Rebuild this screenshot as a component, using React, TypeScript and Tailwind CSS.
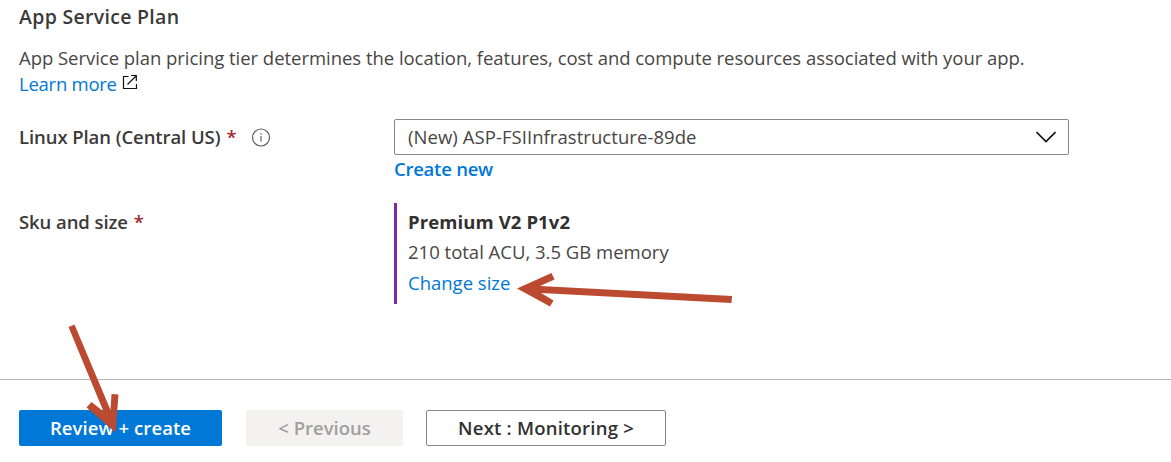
import type { ReactNode } from "react";

function Required() {
  return <span className="ml-1.5 font-semibold text-[#a4262c]">*</span>;
}

function ExternalIcon() {
  return (
    <svg className="mt-[3px] ml-[5px] h-4 w-4" viewBox="0 0 16 16" fill="none" stroke="#111" strokeWidth="1.2">
      <path d="M6.5 2.5H1.5V14.5H14.5V10" />
      <path d="M9 1.5H14.3V7M14 2L5.5 10.5" />
    </svg>
  );
}

function InfoIcon() {
  return (
    <svg className="ml-[14px] h-5 w-5" viewBox="0 0 20 20" fill="none" stroke="#605e5c" strokeWidth="1.2">
      <circle cx="10" cy="10.5" r="8.5" />
      <path d="M10 9V14.5M10 6.3V7.7" />
    </svg>
  );
}

function Field({ label, children }: { label: ReactNode; children: ReactNode }) {
  return (
    <div className="flex">
      <div className="flex w-[375px] shrink-0 items-start font-semibold text-[#3b3a39]">{label}</div>
      <div>{children}</div>
    </div>
  );
}

export default function App() {
  return (
    <div className="relative h-[462px] w-[1171px] overflow-hidden bg-white font-['Open_Sans',sans-serif] text-[18.5px] leading-[26px] text-[#484644]">
      <main className="h-[379px] pt-1 pl-[19px] whitespace-nowrap">
        <h2 className="text-[19.5px] font-semibold tracking-[0.3px] text-[#3b3a39]">App Service Plan</h2>
        <p className="mt-[15px] tracking-[-0.035px]">
          App Service plan pricing tier determines the location, features, cost and compute resources associated with your app.
        </p>
        <div className="flex h-[26px]">
          <a className="tracking-[-0.25px] text-[#0078d4]">Learn more</a>
          <ExternalIcon />
        </div>
        <div className="mt-[22px]">
          <Field
            label={
              <div className="flex h-9 items-center">
                <span className="tracking-[-0.08px]">Linux Plan (Central US)</span>
                <Required />
                <InfoIcon />
              </div>
            }
          >
            <div className="flex h-9 w-[675px] items-center justify-between rounded-[2px] border border-[#8a8886] pr-3 pl-[13px]">
              <span className="tracking-[0.06px]">(New) ASP-FSIInfrastructure-89de</span>
              <svg className="h-5 w-5" viewBox="0 0 20 20" fill="none" stroke="#111" strokeWidth="1.6">
                <path d="M0.5 5L10 14.5L19.5 5" />
              </svg>
            </div>
            <a className="mt-px block font-semibold tracking-[-0.25px] text-[#0078d4]">Create new</a>
          </Field>
        </div>
        <div className="mt-[21px]">
          <Field
            label={
              <div className="flex pt-[6px]">
                <span className="tracking-[-0.08px]">Sku and size</span>
                <Required />
              </div>
            }
          >
            <div className="flex h-[101px] flex-col border-l-[3px] border-[#7f27a8] pt-[6px] pl-[11px]">
              <strong className="font-bold tracking-[0.1px] text-[#323130]">Premium V2 P1v2</strong>
              <span className="mt-1">210 total ACU, 3.5 GB memory</span>
              <a className="mt-[5px] text-[#0078d4]">Change size</a>
            </div>
          </Field>
        </div>
      </main>
      <footer className="flex h-[83px] items-start border-t border-[#b5b4b2] pt-[30px] pl-[19px] font-semibold">
        <button className="h-9 w-[203px] rounded-[2px] bg-[#0078d7] tracking-[0.08px] text-white">Review + create</button>
        <button className="ml-6 h-9 w-[157px] rounded-[2px] bg-[#f3f2f1] text-[#a19f9d]" disabled>
          &lt; Previous
        </button>
        <button className="ml-[23px] h-9 w-60 rounded-[2px] border border-[#8a8886] tracking-[0.22px] text-[#323130]">
          Next : Monitoring &gt;
        </button>
      </footer>
      <svg className="pointer-events-none absolute inset-0 h-full w-full" viewBox="0 0 1171 462" fill="#bc4a31">
        <path d="M517 288.5L551.5 273L554.5 279.5L540 286L732 296L731.5 303L541 293L553.5 300.5L550 306.5Z" />
        <path d="M68.5 327L74.5 324.5L110.5 410L111.5 394L118.5 394.5L115.5 432.5L86.5 407.5L91.5 402L103.5 411.5Z" />
      </svg>
    </div>
  );
}
